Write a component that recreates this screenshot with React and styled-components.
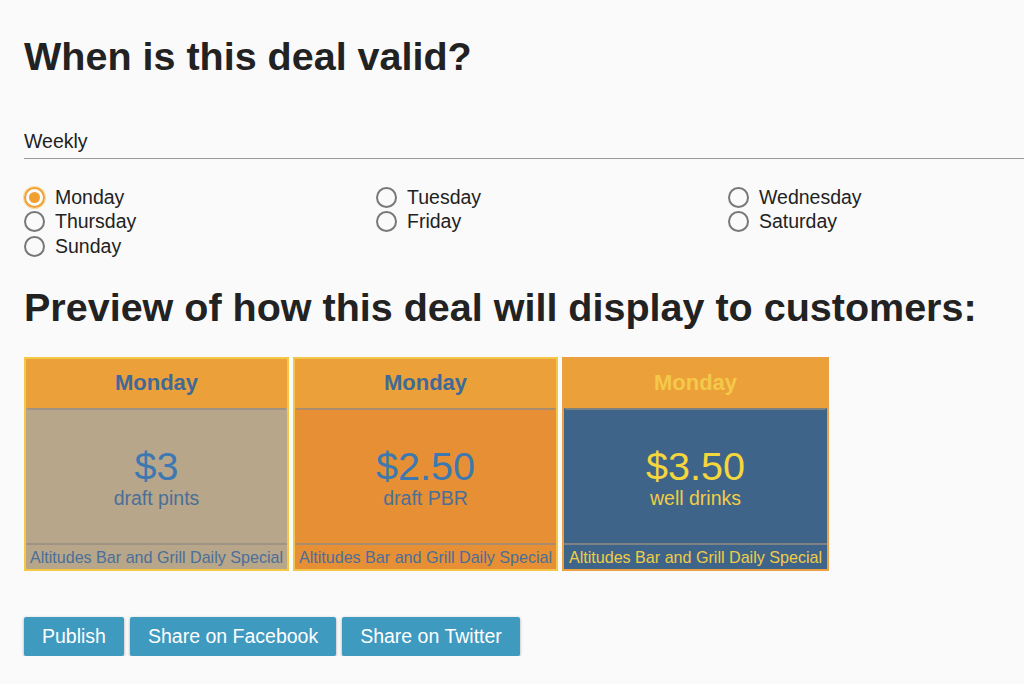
import React, { useState } from 'react';
import styled, { createGlobalStyle } from 'styled-components';

const GlobalStyle = createGlobalStyle`
  body {
    margin: 0;
    background: #fafafa;
    font-family: "Liberation Sans", Arial, sans-serif;
    color: #222;
  }
`;

const Page = styled.div`
  padding: 0 0 0 24px;
  overflow: hidden;
`;

const Heading = styled.h1`
  font-size: 39.5px;
  font-weight: bold;
  margin: 0;
  line-height: 46px;
  padding-top: ${p => p.top}px;
  white-space: nowrap;
`;

const Weekly = styled.div`
  margin-top: 51px;
  font-size: 19.5px;
  line-height: 22px;
  padding-bottom: 6px;
  border-bottom: 1px solid #999;
`;

const DayGrid = styled.div`
  display: grid;
  grid-template-columns: 352px 352px 1fr;
  margin-top: 26px;
`;

const DayOption = styled.label`
  display: flex;
  align-items: center;
  height: 24.5px;
  font-size: 19.5px;
  cursor: pointer;
`;

const Circle = styled.span`
  box-sizing: border-box;
  width: 21px;
  height: 21px;
  border-radius: 50%;
  border: 2px solid ${p => (p.checked ? '#f0a030' : '#777')};
  box-shadow: ${p => (p.checked ? '0 0 0 1px #fbd9a0' : 'none')};
  margin-right: 10px;
  display: flex;
  align-items: center;
  justify-content: center;
  &::after {
    content: '';
    width: 11px;
    height: 11px;
    border-radius: 50%;
    background: ${p => (p.checked ? '#f0a030' : 'transparent')};
  }
`;

const Cards = styled.div`
  display: flex;
  gap: 4px;
  margin-top: 27px;
`;

const Card = styled.div`
  box-sizing: border-box;
  width: ${p => p.w}px;
  border: 2px solid ${p => p.edge};
  display: flex;
  flex-direction: column;
  background: #eda03a;
`;

const CardHeader = styled.div`
  height: 49px;
  display: flex;
  align-items: center;
  justify-content: center;
  font-size: 22px;
  font-weight: bold;
  color: ${p => p.ink};
  background: #eca039;
`;

const CardBody = styled.div`
  height: 133px;
  background: ${p => p.bg};
  border-top: 2px solid rgba(150, 140, 130, 0.75);
  border-left: 2px solid ${p => p.bg};
  border-right: 2px solid ${p => p.bg};
  display: flex;
  flex-direction: column;
  align-items: center;
  justify-content: center;
  color: ${p => p.ink};
`;

const Price = styled.div`
  font-size: 39.5px;
  line-height: 42px;
  margin-top: 2px;
  color: ${p => p.ink};
`;

const Item = styled.div`
  font-size: 19.5px;
  line-height: 22px;
`;

const CardFooter = styled.div`
  height: 24px;
  background: ${p => p.bg};
  border-top: 2px solid rgba(150, 140, 130, 0.75);
  font-size: 16.1px;
  line-height: 24px;
  text-align: center;
  white-space: nowrap;
  color: ${p => p.ink};
`;

const Actions = styled.div`
  display: flex;
  gap: 6px;
  margin-top: 46px;
`;

const Button = styled.button`
  background: #3f9abf;
  color: #fff;
  border: none;
  border-radius: 2px;
  height: 39px;
  padding: 0 18px;
  font-family: "Liberation Sans", Arial, sans-serif;
  font-size: 19.5px;
  box-shadow: 0 1px 3px rgba(0, 0, 0, 0.35);
  cursor: pointer;
`;

const days = ['Monday', 'Tuesday', 'Wednesday', 'Thursday', 'Friday', 'Saturday', 'Sunday'];

const cards = [
  { price: '$3', item: 'draft pints', w: 265, bg: '#b8a68b', ink: '#4a6f98', priceInk: '#3d78b0', head: '#3f6a98', edge: '#f3c843' },
  { price: '$2.50', item: 'draft PBR', w: 265, bg: '#e78f35', ink: '#4a6f98', priceInk: '#3d78b0', head: '#3f6a98', edge: '#f3c64a' },
  { price: '$3.50', item: 'well drinks', w: 267, bg: '#3e6589', ink: '#f2cc45', priceInk: '#f5d63c', head: '#f4c94a', edge: '#eba041' },
];

export default function App() {
  const [day, setDay] = useState('Monday');

  return (
    <Page>
      <GlobalStyle />
      <Heading top={33}>When is this deal valid?</Heading>
      <Weekly>Weekly</Weekly>
      <DayGrid>
        {days.map(d => (
          <DayOption key={d} onClick={() => setDay(d)}>
            <Circle checked={day === d} />
            {d}
          </DayOption>
        ))}
      </DayGrid>
      <Heading top={25}>Preview of how this deal will display to customers:</Heading>
      <Cards>
        {cards.map(c => (
          <Card key={c.price} edge={c.edge} w={c.w}>
            <CardHeader ink={c.head}>{day}</CardHeader>
            <CardBody bg={c.bg} ink={c.ink}>
              <Price ink={c.priceInk}>{c.price}</Price>
              <Item>{c.item}</Item>
            </CardBody>
            <CardFooter bg={c.bg} ink={c.ink}>Altitudes Bar and Grill Daily Special</CardFooter>
          </Card>
        ))}
      </Cards>
      <Actions>
        <Button>Publish</Button>
        <Button>Share on Facebook</Button>
        <Button>Share on Twitter</Button>
      </Actions>
    </Page>
  );
}
